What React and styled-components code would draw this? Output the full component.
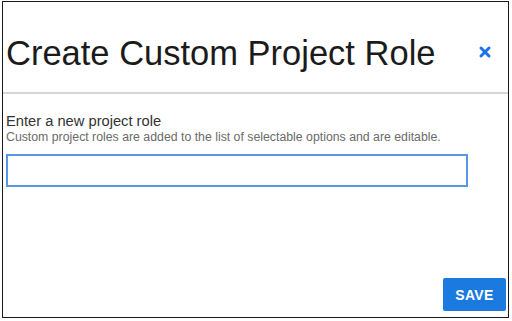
import React from "react";
import styled, { createGlobalStyle } from "styled-components";

const Global = createGlobalStyle`
  html, body { margin: 0; padding: 0; background: #fff; }
  body { font-family: "Liberation Sans", Arial, sans-serif; }
`;

const Frame = styled.div`
  box-sizing: border-box;
  margin: 1px 0 0 2px;
  width: 507px;
  height: 317px;
  border: 1px solid #1a1a1a;
  display: flex;
  flex-direction: column;
`;

const Header = styled.div`
  display: flex;
  align-items: center;
  justify-content: space-between;
  height: 90px;
  padding: 0 16px 0 3px;
  border-bottom: 2px solid #d6d6d6;
`;

const Title = styled.h1`
  margin: 0;
  font-weight: 400;
  font-size: 34.5px;
  color: #1b1b1b;
  padding-top: 12px;
`;

const Close = styled.button`
  border: 0;
  background: none;
  padding: 0;
  margin-top: 10px;
  width: 14px;
  height: 14px;
  display: flex;
  cursor: pointer;
`;

const Body = styled.div`
  flex: 1;
  display: flex;
  flex-direction: column;
  padding: 19px 0 0 3px;
`;

const Label = styled.div`
  font-size: 14.7px;
  color: #333;
  line-height: 17px;
`;

const Hint = styled.div`
  font-size: 12.3px;
  color: #6b6b6b;
  line-height: 14px;
`;

const Input = styled.input`
  box-sizing: border-box;
  margin-top: 10px;
  width: 462px;
  height: 33px;
  border: 2px solid #5599e6;
  outline: none;
  font: inherit;
`;

const Footer = styled.div`
  display: flex;
  justify-content: flex-end;
  padding: 0 2px 6px 0;
`;

const Save = styled.button`
  width: 63px;
  height: 33px;
  background: #1a7ae0;
  color: #fff;
  border: 0;
  border-radius: 2px;
  font-family: "Liberation Sans", Arial, sans-serif;
  font-weight: 700;
  font-size: 14px;
  letter-spacing: 0.3px;
`;

export default function App() {
  return (
    <>
      <Global />
      <Frame>
        <Header>
          <Title>Create Custom Project Role</Title>
          <Close aria-label="close">
            <svg width="14" height="14" viewBox="0 0 14 14">
              <path d="M3 3 L11 11 M11 3 L3 11" stroke="#1a73e8" strokeWidth="3" strokeLinecap="round" />
            </svg>
          </Close>
        </Header>
        <Body>
          <Label>Enter a new project role</Label>
          <Hint>Custom project roles are added to the list of selectable options and are editable.</Hint>
          <Input />
        </Body>
        <Footer>
          <Save>SAVE</Save>
        </Footer>
      </Frame>
    </>
  );
}
